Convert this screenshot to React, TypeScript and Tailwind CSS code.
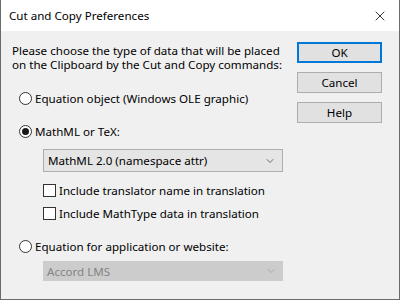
import { ChevronDown, X } from 'lucide-react';

function Radio({ checked, label }: { checked?: boolean; label: string }) {
  return (
    <div className="flex items-center h-[14px]">
      <span className="w-[13px] h-[13px] rounded-full border border-[#333] bg-white flex items-center justify-center">
        {checked && <span className="w-[7px] h-[7px] rounded-full bg-[#1a1a1a]" />}
      </span>
      <span className="ml-[3px]">{label}</span>
    </div>
  );
}

function Check({ label }: { label: string }) {
  return (
    <div className="flex items-center h-[14px]">
      <span className="w-[13px] h-[13px] border border-[#333] bg-white" />
      <span className="ml-[3px]">{label}</span>
    </div>
  );
}

function Select({ value, disabled }: { value: string; disabled?: boolean }) {
  return (
    <div
      className={`w-[240px] flex items-center justify-between pl-[4px] pr-[6px] ${
        disabled
          ? 'h-[20px] bg-[#cccccc] text-[#838383]'
          : 'h-[23px] border bg-[#e5e5e5] border-[#adadad] text-black'
      }`}
    >
      <span>{value}</span>
      <ChevronDown className={`w-[12px] h-[12px] ${disabled ? 'text-[#a0a0a0]' : 'text-[#444]'}`} strokeWidth={1.5} />
    </div>
  );
}

export default function App() {
  return (
    <div className="w-[400px] h-[300px] flex flex-col bg-[#f0f0f0] border-l border-r border-b border-[#6b6b6b] text-[11.6px] text-black font-['Noto_Sans',sans-serif] leading-[13px]">
      {/* Title bar */}
      <div className="h-[31px] bg-white flex items-center justify-between pl-[8px] pr-[8px]">
        <span className="text-[11.6px]">Cut and Copy Preferences</span>
        <X className="w-[16px] h-[16px] mr-[3px]" strokeWidth={1.2} />
      </div>

      <div className="flex flex-1">
        {/* Options */}
        <div className="flex-1 pl-[11px] pt-[13px]">
          <p className="leading-[14px]">
            Please choose the type of data that will be placed
            <br />
            on the Clipboard by the Cut and Copy commands:
          </p>
          <div className="pl-[7px] mt-[19px]">
            <Radio label="Equation object (Windows OLE graphic)" />
          </div>
          <div className="pl-[7px] mt-[19px]">
            <Radio checked label="MathML or TeX:" />
          </div>
          <div className="pl-[31px] mt-[11px] flex flex-col">
            <Select value="MathML 2.0 (namespace attr)" />
            <div className="mt-[11px]">
              <Check label="Include translator name in translation" />
            </div>
            <div className="mt-[9px]">
              <Check label="Include MathType data in translation" />
            </div>
          </div>
          <div className="pl-[7px] mt-[19px]">
            <Radio label="Equation for application or website:" />
          </div>
          <div className="pl-[31px] mt-[8px]">
            <Select value="Accord LMS" disabled />
          </div>
        </div>

        {/* Buttons */}
        <div className="w-[85px] mr-[17px] pt-[11px] flex flex-col gap-[9px]">
          <button className="h-[21px] bg-[#e1e1e1] border-2 border-[#0078d7]">OK</button>
          <button className="h-[21px] bg-[#e1e1e1] border border-[#adadad]">Cancel</button>
          <button className="h-[21px] bg-[#e1e1e1] border border-[#adadad]">Help</button>
        </div>
      </div>
    </div>
  );
}
